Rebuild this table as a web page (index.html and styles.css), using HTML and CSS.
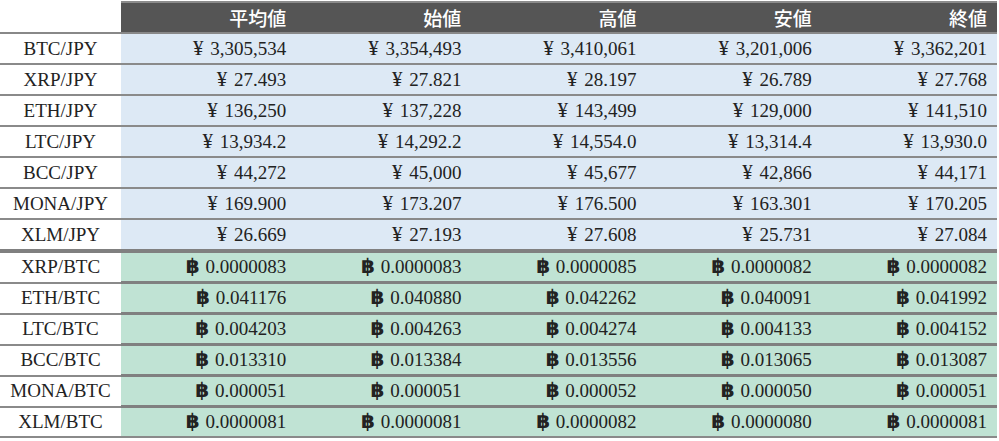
FILE: index.html
```html
<!DOCTYPE html>
<html lang="ja">
<head>
<meta charset="utf-8">
<link rel="stylesheet" href="styles.css">
</head>
<body>
<table class="rates">
  <colgroup>
    <col class="c-pair"><col><col><col><col><col>
  </colgroup>
  <thead>
    <tr>
      <th class="blank"></th>
      <th>平均値</th><th>始値</th><th>高値</th><th>安値</th><th>終値</th>
    </tr>
  </thead>
  <tbody>
    <tr class="jpy"><td class="pair">BTC/JPY</td><td><span class="y">¥</span> 3,305,534</td><td><span class="y">¥</span> 3,354,493</td><td><span class="y">¥</span> 3,410,061</td><td><span class="y">¥</span> 3,201,006</td><td><span class="y">¥</span> 3,362,201</td></tr>
    <tr class="jpy"><td class="pair">XRP/JPY</td><td><span class="y">¥</span> 27.493</td><td><span class="y">¥</span> 27.821</td><td><span class="y">¥</span> 28.197</td><td><span class="y">¥</span> 26.789</td><td><span class="y">¥</span> 27.768</td></tr>
    <tr class="jpy"><td class="pair">ETH/JPY</td><td><span class="y">¥</span> 136,250</td><td><span class="y">¥</span> 137,228</td><td><span class="y">¥</span> 143,499</td><td><span class="y">¥</span> 129,000</td><td><span class="y">¥</span> 141,510</td></tr>
    <tr class="jpy"><td class="pair">LTC/JPY</td><td><span class="y">¥</span> 13,934.2</td><td><span class="y">¥</span> 14,292.2</td><td><span class="y">¥</span> 14,554.0</td><td><span class="y">¥</span> 13,314.4</td><td><span class="y">¥</span> 13,930.0</td></tr>
    <tr class="jpy"><td class="pair">BCC/JPY</td><td><span class="y">¥</span> 44,272</td><td><span class="y">¥</span> 45,000</td><td><span class="y">¥</span> 45,677</td><td><span class="y">¥</span> 42,866</td><td><span class="y">¥</span> 44,171</td></tr>
    <tr class="jpy"><td class="pair">MONA/JPY</td><td><span class="y">¥</span> 169.900</td><td><span class="y">¥</span> 173.207</td><td><span class="y">¥</span> 176.500</td><td><span class="y">¥</span> 163.301</td><td><span class="y">¥</span> 170.205</td></tr>
    <tr class="jpy"><td class="pair">XLM/JPY</td><td><span class="y">¥</span> 26.669</td><td><span class="y">¥</span> 27.193</td><td><span class="y">¥</span> 27.608</td><td><span class="y">¥</span> 25.731</td><td><span class="y">¥</span> 27.084</td></tr>
    <tr class="btc first"><td class="pair">XRP/BTC</td><td><span class="b">฿</span> 0.0000083</td><td><span class="b">฿</span> 0.0000083</td><td><span class="b">฿</span> 0.0000085</td><td><span class="b">฿</span> 0.0000082</td><td><span class="b">฿</span> 0.0000082</td></tr>
    <tr class="btc"><td class="pair">ETH/BTC</td><td><span class="b">฿</span> 0.041176</td><td><span class="b">฿</span> 0.040880</td><td><span class="b">฿</span> 0.042262</td><td><span class="b">฿</span> 0.040091</td><td><span class="b">฿</span> 0.041992</td></tr>
    <tr class="btc"><td class="pair">LTC/BTC</td><td><span class="b">฿</span> 0.004203</td><td><span class="b">฿</span> 0.004263</td><td><span class="b">฿</span> 0.004274</td><td><span class="b">฿</span> 0.004133</td><td><span class="b">฿</span> 0.004152</td></tr>
    <tr class="btc"><td class="pair">BCC/BTC</td><td><span class="b">฿</span> 0.013310</td><td><span class="b">฿</span> 0.013384</td><td><span class="b">฿</span> 0.013556</td><td><span class="b">฿</span> 0.013065</td><td><span class="b">฿</span> 0.013087</td></tr>
    <tr class="btc"><td class="pair">MONA/BTC</td><td><span class="b">฿</span> 0.000051</td><td><span class="b">฿</span> 0.000051</td><td><span class="b">฿</span> 0.000052</td><td><span class="b">฿</span> 0.000050</td><td><span class="b">฿</span> 0.000051</td></tr>
    <tr class="btc"><td class="pair">XLM/BTC</td><td><span class="b">฿</span> 0.0000081</td><td><span class="b">฿</span> 0.0000081</td><td><span class="b">฿</span> 0.0000082</td><td><span class="b">฿</span> 0.0000080</td><td><span class="b">฿</span> 0.0000081</td></tr>
  </tbody>
</table>
</body>
</html>
```
FILE: styles.css
```css
html, body {
  margin: 0;
  padding: 0;
  background: #fff;
}
body {
  padding-top: 1px;
}
.rates {
  width: 997px;
  border-collapse: collapse;
  table-layout: fixed;
  font-family: "Liberation Serif", "Noto Sans CJK JP", serif;
  font-size: 19px;
  color: #222;
}
.c-pair {
  width: 121px;
}
.rates th {
  background: #555;
  color: #fff;
  font-family: "Noto Sans CJK JP", sans-serif;
  font-weight: 500;
  font-size: 19px;
  text-align: right;
  padding: 0 10px;
  height: 29px;
  line-height: 29px;
  border-top: 2px solid #8c8c8c;
  border-bottom: 2px solid #888;
}
.rates th.blank {
  background: #fff;
  border-top: none;
}
.rates td {
  height: 29px;
  line-height: 28px;
  padding: 0 10px;
  text-align: right;
  white-space: nowrap;
  border-bottom: 2px solid #8a8a8a;
}
.rates td.pair {
  text-align: center;
  background: #fff;
  padding: 0;
}
.jpy td {
  background: #dde9f5;
}
.btc td {
  background: #c0e3d4;
  height: 28px;
  border-top: 3px solid #808080;
}
.btc td.pair {
  border-top: 2px solid #8a8a8a;
}
.btc.first td,
.btc.first td.pair {
  border-top: 4px solid #808080;
}
.y {
  font-size: 21px;
  line-height: 0;
  margin-right: 2px;
}
.b {
  font-family: "DejaVu Sans", sans-serif;
  font-weight: bold;
  font-size: 20px;
  line-height: 0;
  margin-right: 1px;
}
```
